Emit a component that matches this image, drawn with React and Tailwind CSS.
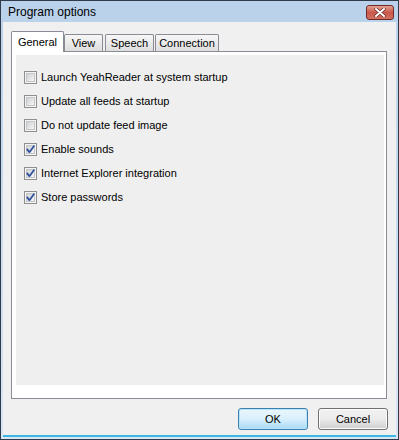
import React from "react";

function CheckBox({ checked }) {
  return (
    <svg width="13" height="13" viewBox="0 0 13 13" className="shrink-0">
      <defs>
        <linearGradient id="cbg" x1="0" y1="0" x2="1" y2="1">
          <stop offset="0" stopColor="#cdd0d4" />
          <stop offset="1" stopColor="#f7f7f7" />
        </linearGradient>
      </defs>
      <rect x="0.5" y="0.5" width="12" height="12" fill="#f4f4f4" stroke="#8f8f8f" />
      <rect x="2.5" y="2.5" width="8" height="8" fill="url(#cbg)" stroke="#c4c6c8" />
      {checked && (
        <path d="M3.2 6.4 L5.4 9.2 L9.8 3.2" fill="none" stroke="#2a4c9e" strokeWidth="1.7" strokeLinecap="round" strokeLinejoin="round" />
      )}
    </svg>
  );
}

function Row({ label, checked }) {
  return (
    <div className="flex items-center h-[24px]">
      <CheckBox checked={checked} />
      <span className="ml-[4px] text-[11px] text-black leading-none">{label}</span>
    </div>
  );
}

function Tab({ label, selected, w }) {
  if (selected) {
    return (
      <div
        className="h-[21px] bg-white border border-b-0 border-[#898c95] flex items-center justify-center text-[11px] relative z-10 -mb-[1px] rounded-t-[2px]"
        style={{ width: w }}
      >
        {label}
      </div>
    );
  }
  return (
    <div
      className="h-[17px] border border-b-0 border-[#898c95] bg-gradient-to-b from-[#f7f7f7] to-[#dedede] flex items-center justify-center text-[11px] pt-[1px] rounded-t-[2px]"
      style={{ width: w }}
    >
      {label}
    </div>
  );
}

export default function App() {
  const rows = [
    ["Launch YeahReader at system startup", false],
    ["Update all feeds at startup", false],
    ["Do not update feed image", false],
    ["Enable sounds", true],
    ["Internet Explorer integration", true],
    ["Store passwords", true],
  ];
  return (
    <div
      className="w-[399px] h-[440px] bg-[#2f3b4a] p-[1px] pt-[1px] pb-[1px] flex flex-col"
      style={{ fontFamily: '"Liberation Sans", Arial, sans-serif' }}
    >
      <div className="flex-1 flex flex-col bg-gradient-to-b from-[#b9d1ea] to-[#d9e6f4] pl-[2px] pr-[2px] pb-[2px]">
        {/* Title bar */}
        <div className="h-[21px] flex items-center justify-between">
          <span className="ml-[5px] text-[12px] text-black">Program options</span>
          <div className="mr-[2px] mt-[2px] w-[28px] h-[15px] rounded-[3px] border border-[#6e2a28] bg-gradient-to-b from-[#e3a294] via-[#c9584a] to-[#d0705e] flex items-center justify-center">
            <svg width="12" height="9" viewBox="0 0 12 9">
              <path d="M2 1 L10 8 M10 1 L2 8" stroke="#5a2220" strokeWidth="3.2" strokeLinecap="round" />
              <path d="M2 1 L10 8 M10 1 L2 8" stroke="#ffffff" strokeWidth="2" strokeLinecap="round" />
            </svg>
          </div>
        </div>
        {/* Client */}
        <div className="flex-1 bg-[#f0f0f0] border-b-[2px] border-[#3fb7e3] flex flex-col">
          <div className="pl-[8px] pr-[9px] pt-[8px]">
            {/* tabs */}
            <div className="flex items-end h-[21px]">
              <Tab label="General" selected w={53} />
              <Tab label="View" w={39} />
              <div className="w-[2px]" />
              <Tab label="Speech" w={49} />
              <div className="w-[1px]" />
              <Tab label="Connection" w={64} />
            </div>
            {/* panel */}
            <div className="h-[348px] border border-[#898c95] bg-white pl-[4px] pt-[3px] pr-[2px] pb-[13px]">
              <div className="h-full bg-[#efefef] pl-[8px] pt-[10px]">
                {rows.map(([l, c]) => (
                  <Row key={l} label={l} checked={c} />
                ))}
              </div>
            </div>
          </div>
          <div className="flex justify-end gap-[10px] pr-[8px] mt-[9px]">
            <button className="w-[70px] h-[22px] rounded-[3px] border border-[#3c7fb1] bg-gradient-to-b from-[#eaf6fd] via-[#d9f0fc] to-[#a7d9f5] shadow-[inset_0_0_0_1px_#b7e5f7] text-[11px] text-black">
              OK
            </button>
            <button className="w-[70px] h-[22px] rounded-[3px] border border-[#707070] bg-gradient-to-b from-[#f2f2f2] via-[#ebebeb] to-[#cfcfcf] shadow-[inset_0_0_0_1px_#fcfcfc] text-[11px] text-black">
              Cancel
            </button>
          </div>
        </div>
      </div>
    </div>
  );
}
